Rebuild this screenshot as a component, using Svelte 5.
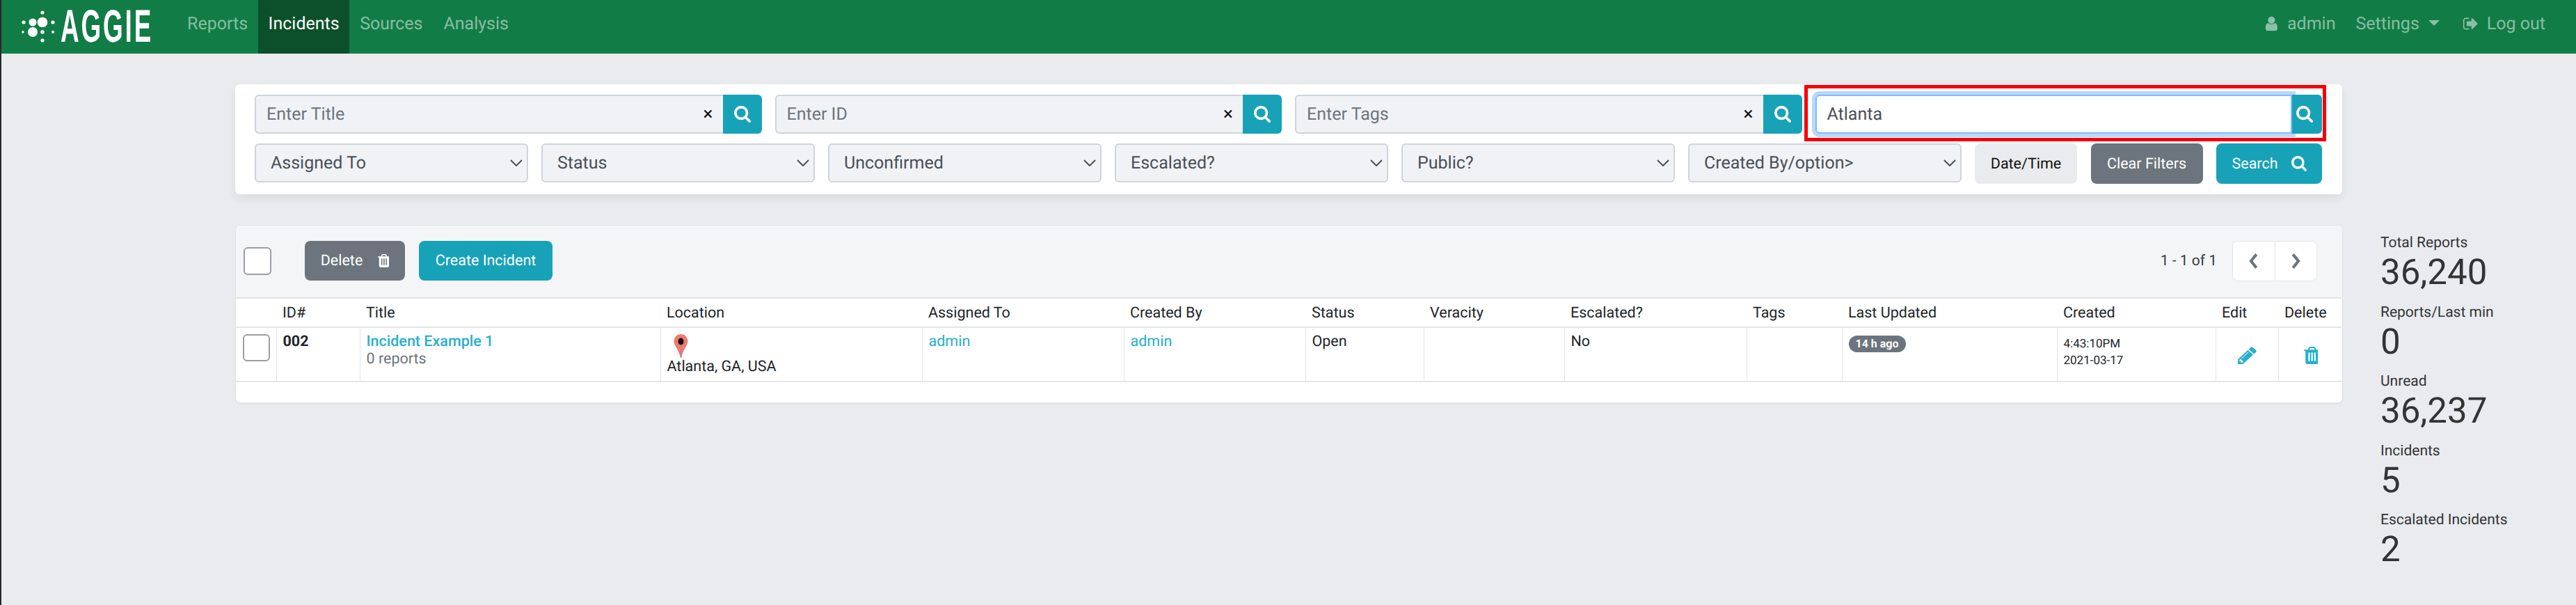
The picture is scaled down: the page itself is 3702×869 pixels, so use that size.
<script>
  const searches = [
    { label: 'Enter Title' },
    { label: 'Enter ID' },
    { label: 'Enter Tags' }
  ];
  const selects = ['Assigned To', 'Status', 'Unconfirmed', 'Escalated?', 'Public?', 'Created By/option>'];
  const heads = ['', 'ID#', 'Title', 'Location', 'Assigned To', 'Created By', 'Status', 'Veracity', 'Escalated?', 'Tags', 'Last Updated', 'Created', 'Edit', 'Delete'];
  const stats = [
    ['Total Reports', '36,240'],
    ['Reports/Last min', '0'],
    ['Unread', '36,237'],
    ['Incidents', '5'],
    ['Escalated Incidents', '2']
  ];
  const searchPath = 'M1152 704q0-185-131.5-316.5t-316.5-131.5-316.5 131.5-131.5 316.5 131.5 316.5 316.5 131.5 316.5-131.5 131.5-316.5zm512 832q0 52-38 90t-90 38q-54 0-90-38l-343-342q-179 124-399 124-143 0-273.5-55.5t-225-150-150-225-55.5-273.5 55.5-273.5 150-225 225-150 273.5-55.5 273.5 55.5 225 150 150 225 55.5 273.5q0 220-124 399l343 343q37 37 37 90z';
  const trashPath = 'M704 1376v-704q0-14-9-23t-23-9h-64q-14 0-23 9t-9 23v704q0 14 9 23t23 9h64q14 0 23-9t9-23zm256 0v-704q0-14-9-23t-23-9h-64q-14 0-23 9t-9 23v704q0 14 9 23t23 9h64q14 0 23-9t9-23zm256 0v-704q0-14-9-23t-23-9h-64q-14 0-23 9t-9 23v704q0 14 9 23t23 9h64q14 0 23-9t9-23zm-544-992h448l-48-117q-7-9-17-11h-317q-10 2-17 11zm928 32v64q0 14-9 23t-23 9h-96v948q0 83-47 143.5t-113 60.5h-832q-66 0-113-58.5t-47-141.5v-952h-96q-14 0-23-9t-9-23v-64q0-14 9-23t23-9h309l70-167q15-37 54-63t79-26h320q40 0 79 26t54 63l70 167h309q14 0 23 9t9 23z';
  const pencilPath = 'M491 1536l91-91-235-235-91 91v107h128v128h107zm523-928q0-22-22-22-10 0-17 7l-542 542q-7 7-7 17 0 22 22 22 10 0 17-7l542-542q7-7 7-17zm-54-192l416 416-832 832h-416v-416zm683 96q0 53-37 90l-166 166-416-416 166-165q36-38 90-38 53 0 91 38l235 234q37 39 37 91z';
  const userPath = 'M1408 1399q0 109-62.5 187t-150.5 78h-854q-88 0-150.5-78t-62.5-187q0-85 8.5-160.5t31.5-152 58.5-131 94-89 134.5-34.5q131 128 313 128t313-128q76 0 134.5 34.5t94 89 58.5 131 31.5 152 8.5 160.5zm-256-887q0 159-112.5 271.5t-271.5 112.5-271.5-112.5-112.5-271.5 112.5-271.5 271.5-112.5 271.5 112.5 112.5 271.5z';
  const logoutPath = 'M704 1440q0 4 1 20t.5 26.5-3 23.5-10 19.5-20.5 6.5h-320q-119 0-203.5-84.5t-84.5-203.5v-704q0-119 84.5-203.5t203.5-84.5h320q13 0 22.5 9.5t9.5 22.5q0 4 1 20t.5 26.5-3 23.5-10 19.5-20.5 6.5h-320q-66 0-113 47t-47 113v704q0 66 47 113t113 47h312l11.5 1 11.5 3 8 5.5 7 9 2 13.5zm928-544q0 26-19 45l-544 544q-19 19-45 19t-45-19-19-45v-288h-448q-26 0-45-19t-19-45v-384q0-26 19-45t45-19h448v-288q0-26 19-45t45-19 45 19l544 544q19 19 19 45z';
</script>

<div class="app">
  <nav class="nav">
    <div class="logo">
      <svg class="dots" viewBox="0 0 60 60" width="60" height="60" aria-hidden="true">
        <g fill="#fff" transform="translate(-28 -4)">
          <circle cx="61" cy="32" r="7.3"/><circle cx="47" cy="32" r="5.5"/><circle cx="47" cy="46" r="7"/>
          <circle cx="61" cy="46" r="2.8"/><circle cx="61" cy="18" r="2.6"/><circle cx="61" cy="58" r="2.6"/>
          <circle cx="34" cy="32" r="2.6"/><circle cx="33" cy="46" r="1.7"/><circle cx="76" cy="32" r="2.6"/><circle cx="76" cy="46" r="2"/>
        </g>
      </svg>
      <span class="wordmark">AGGIE</span>
    </div>
    <div class="links">
      <a>Reports</a><a class="active">Incidents</a><a>Sources</a><a>Analysis</a>
    </div>
    <div class="right">
      <a class="r-admin"><svg class="ic-user" viewBox="0 0 1408 1792" aria-hidden="true"><path d={userPath}/></svg>admin</a>
      <a class="r-settings">Settings<i class="caret"></i></a>
      <a class="r-logout"><svg class="ic-logout" viewBox="0 0 1664 1792" aria-hidden="true"><path d={logoutPath}/></svg>Log out</a>
    </div>
  </nav>

  <div class="page">
    <main class="main">
      <section class="filters">
        <div class="row1">
          {#each searches as s}
            <div class="igroup">
              <div class="field"><span class="ph">{s.label}</span><span class="clear">×</span></div>
              <button class="go"><svg viewBox="0 0 1664 1664" aria-hidden="true"><path d={searchPath}/></svg></button>
            </div>
          {/each}
          <div class="igroup focused">
            <div class="field"><span class="val">Atlanta</span></div>
            <button class="go"><svg viewBox="0 0 1664 1664" aria-hidden="true"><path d={searchPath}/></svg></button>
            <div class="annot"></div>
          </div>
        </div>
        <div class="row2">
          {#each selects as s}
            <div class="sel"><span>{s}</span>
              <svg viewBox="0 0 18 10" aria-hidden="true"><path d="M1 1l8 8 8-8" fill="none" stroke="#495057" stroke-width="2"/></svg>
            </div>
          {/each}
          <button class="btn date">Date/Time</button>
          <button class="btn grey clearf">Clear Filters</button>
          <button class="btn teal searchb">Search<svg viewBox="0 0 1664 1664" aria-hidden="true"><path d={searchPath}/></svg></button>
        </div>
      </section>

      <section class="tcard">
        <div class="toolbar">
          <span class="check top"></span>
          <button class="btn grey del">Delete<svg viewBox="0 128 1408 1536" aria-hidden="true"><path d={trashPath}/></svg></button>
          <button class="btn teal create">Create Incident</button>
          <div class="pager">
            <span class="count">1 - 1 of 1</span>
            <div class="pbtns">
              <button aria-label="previous"><svg viewBox="0 0 12 20"><path d="M9.5 2L3 10l6.5 8" fill="none" stroke="#6c757d" stroke-width="3.4"/></svg></button>
              <button aria-label="next"><svg viewBox="0 0 12 20"><path d="M2.5 2L9 10l-6.5 8" fill="none" stroke="#6c757d" stroke-width="3.4"/></svg></button>
            </div>
          </div>
        </div>
        <table>
          <colgroup>
            <col class="c0"/><col class="c1"/><col class="c2"/><col class="c3"/><col class="c4"/><col class="c5"/><col class="c6"/>
            <col class="c7"/><col class="c8"/><col class="c9"/><col class="c10"/><col class="c11"/><col class="c12"/><col class="c13"/>
          </colgroup>
          <thead><tr>{#each heads as h}<th>{h}</th>{/each}</tr></thead>
          <tbody>
            <tr>
              <td class="cb"><span class="check"></span></td>
              <td><b class="id">002</b></td>
              <td class="title"><a class="tlink">Incident Example 1</a><div class="sub">0 reports</div></td>
              <td class="loc">
                <svg class="pin" viewBox="0 0 21 34" aria-hidden="true">
                  <path d="M10.5 0C4.7 0 .5 4.6.5 10.2c0 6.5 6.8 11 9.2 23.3h1.6c2.4-12.3 9.2-16.8 9.2-23.3C20.5 4.6 16.3 0 10.5 0z" fill="#ef7b70"/>
                  <path d="M10 22h1l-.1 12h-.8z" fill="#8f8f8f"/>
                  <ellipse cx="10.5" cy="10.5" rx="4" ry="5" fill="#111"/>
                </svg>
                <div>Atlanta, GA, USA</div>
              </td>
              <td><a class="l">admin</a></td>
              <td><a class="l">admin</a></td>
              <td>Open</td>
              <td></td>
              <td>No</td>
              <td></td>
              <td><span class="badge">14 h ago</span></td>
              <td class="when"><div>4:43:10PM</div><div>2021-03-17</div></td>
              <td class="act"><svg class="pencil" viewBox="128 128 1536 1536" preserveAspectRatio="none" aria-hidden="true"><path d={pencilPath}/></svg></td>
              <td class="act"><svg class="bin" viewBox="0 128 1408 1536" preserveAspectRatio="none" aria-hidden="true"><path d={trashPath}/></svg></td>
            </tr>
          </tbody>
        </table>
      </section>
    </main>

    <aside class="stats">
      {#each stats as [k, v]}
        <div class="stat"><div class="k">{k}</div><div class="v">{v}</div></div>
      {/each}
    </aside>
  </div>
</div>

<style>
  :global(body) { margin: 0; background: #e9ebef; }
  * { box-sizing: border-box; }
  .app { width: 3702px; height: 869px; overflow: hidden; border-left: 2px solid #26292b; background: #e9ebef; font-family: Roboto, "Liberation Sans", sans-serif; color: #212529; text-rendering: geometricPrecision; }
  button { font-family: inherit; border: 0; padding: 0; margin: 0; text-rendering: geometricPrecision; }

  .nav { height: 77px; background: #117c45; display: flex; align-items: stretch; }
  .logo { width: 232px; display: flex; align-items: flex-start; position: relative; overflow: hidden; }
  .dots { flex: none; margin: 4px 0 0 26px; }
  .wordmark { position: absolute; left: 85px; top: 0; font-family: "Liberation Sans", sans-serif; font-size: 66px; line-height: 74px; font-weight: 700; color: #fff; letter-spacing: 5px; transform: scaleX(.56); transform-origin: left top; }
  .links { display: flex; }
  .links a { display: flex; align-items: center; padding: 0 0 9px; font-size: 25px; color: rgba(255,255,255,.5); }
  .links a:nth-child(1) { margin-left: 35px; margin-right: 15px; }
  .links a:nth-child(2) { width: 131px; justify-content: center; color: #fff; background: #0c5029; }
  .links a:nth-child(3) { margin-left: 15px; margin-right: 30px; }
  .right { margin-left: auto; display: flex; align-items: center; padding-bottom: 9px; font-size: 25px; color: rgba(255,255,255,.5); }
  .right a { display: flex; align-items: center; }
  .ic-user { width: 19px; height: 24px; fill: #8bc0a4; margin-right: 14px; }
  .r-settings { margin-left: 29px; }
  .caret { display: block; width: 0; height: 0; border: 8px solid transparent; border-top: 8px solid #8bc0a4; border-bottom: 0; margin-left: 13px; margin-bottom: 3px; }
  .r-logout { margin-left: 33px; margin-right: 44px; }
  .ic-logout { width: 22px; height: 24px; fill: #8bc0a4; margin-right: 13px; }

  .page { display: flex; align-items: flex-start; }
  .main { width: 3028px; margin-left: 336px; padding-top: 44px; flex: none; }

  .filters { height: 158px; background: #fff; border-radius: 6px; padding: 15px 29px 0 28px; box-shadow: 0 6px 14px rgba(0,0,0,.07); }
  .row1 { display: flex; gap: 19px; }
  .igroup { flex: 1; height: 56px; display: flex; position: relative; min-width: 0; }
  .field { flex: 1; display: flex; align-items: center; justify-content: space-between; padding: 0 14px 0 15px; background: #f1f2f5; border: 2px solid #cfd4da; border-right: 0; border-radius: 6px 0 0 6px; font-size: 25px; }
  .ph { color: #6c757d; }
  .val { color: #495057; }
  .clear { color: #111; font-size: 26px; font-weight: 400; line-height: 1; }
  .go { flex: none; width: 56px; background: #17a2b8; border-radius: 0 6px 6px 0; display: flex; align-items: center; justify-content: center; }
  .go svg { width: 24px; height: 24px; fill: #fff; }
  .focused .field { background: #fff; border: 2px solid #80bdff; border-radius: 6px 0 0 6px; box-shadow: 0 0 0 5px #b8d9fb; }
  .focused .go { width: 43px; position: relative; z-index: 1; padding-right: 8px; }
  .annot { position: absolute; left: -16px; right: -6px; top: -14px; bottom: -11px; border: 5px solid #f40008; z-index: 2; pointer-events: none; }

  .row2 { display: flex; gap: 19.5px; margin-top: 14px; align-items: flex-start; }
  .sel { flex: 1; min-width: 0; height: 56px; background: #f1f2f5; border: 2px solid #cfd4da; border-radius: 6px; font-size: 25px; color: #495057; display: flex; align-items: center; justify-content: space-between; padding: 0 6px 0 21px; }
  .sel svg { width: 18px; height: 10px; flex: none; }
  .btn { height: 58px; border-radius: 8px; font-size: 21.5px; display: flex; align-items: center; justify-content: center; color: #fff; flex: none; }
  .grey { background: #6c757d; }
  .teal { background: #17a2b8; }
  .date { width: 147px; background: #e9ebee; color: #111; }
  .clearf { width: 161px; }
  .searchb { width: 152px; }
  .searchb svg { width: 22px; height: 22px; fill: #fff; margin-left: 19px; }

  .tcard { margin-top: 45px; height: 254px; background: #fff; border-radius: 6px; box-shadow: 0 0 0 1px #e0e2e6, 0 2px 3px rgba(0,0,0,.06); overflow: hidden; margin-left: 1px; }
  .toolbar { height: 103px; background: #f4f5f7; display: flex; align-items: center; padding: 0 36px 2px 11px; }
  .check { display: block; width: 40px; height: 40px; border: 2px solid #9a9ea3; border-radius: 6px; background: #fff; }
  .del { width: 144px; margin-left: 48px; height: 57px; }
  .del svg { width: 19px; height: 19px; fill: #fff; margin-left: 19px; }
  .create { width: 192px; margin-left: 20px; height: 57px; }
  .pager { margin-left: auto; display: flex; align-items: center; }
  .count { font-size: 21px; color: #343a40; margin-right: 22px; }
  .pbtns { display: flex; width: 122px; height: 58px; background: #fff; border: 1px solid #e2e4e8; border-radius: 8px; overflow: hidden; }
  .pbtns button { flex: 1; background: #fff; display: flex; align-items: center; justify-content: center; }
  .pbtns button + button { border-left: 1px solid #dfe1e5; }
  .pbtns svg { width: 15px; height: 24px; }

  table { width: 3026px; table-layout: fixed; border-collapse: collapse; font-size: 21.5px; }
  .c0 { width: 58px; } .c1 { width: 120px; } .c2 { width: 432px; } .c3 { width: 376px; } .c4 { width: 290px; } .c5 { width: 261px; } .c6 { width: 170px; }
  .c7 { width: 202px; } .c8 { width: 262px; } .c9 { width: 137px; } .c10 { width: 309px; } .c11 { width: 228px; } .c12 { width: 90px; } .c13 { width: 91px; }
  th { height: 42px; padding: 0 9px; font-weight: 400; text-align: left; border-top: 2px solid #dfe1e5; border-bottom: 2px solid #e3e5e8; color: #212529; white-space: nowrap; }
  td { height: 78px; padding: 7px 9px 0; vertical-align: top; line-height: 26px; border-bottom: 2px solid #e3e5e8; border-left: 1px solid #e3e5e9; }
  td:first-child { border-left: 0; }
  td.cb { padding: 9px 0 0 10px; }
  td.cb .check { width: 39px; height: 39px; }
  .id { font-weight: 700; }
  .tlink { font-weight: 500; color: #27b0cb; }
  .sub { color: #6c757d; line-height: 24px; }
  .l { color: #27b0cb; }
  .pin { display: block; width: 21px; height: 34px; margin: 2px 0 1px 9px; }
  .loc { line-height: 24px; }
  .badge { display: inline-block; margin-top: 4px; height: 24px; width: 82px; border-radius: 12px; background: #6c757d; color: #fff; font-size: 16px; font-weight: 700; line-height: 24px; text-align: center; vertical-align: top; }
  .when { font-size: 17px; line-height: 24px; padding-top: 11px; }
  .act { padding: 27px 0 0; text-align: center; }
  .pencil { width: 27px; height: 25px; fill: #27b0cb; }
  .bin { width: 23px; height: 25px; fill: #27b0cb; }

  .stats { margin-left: 55px; padding-top: 259px; color: #333; }
  .stat { height: 99.5px; }
  .k { font-size: 21px; line-height: 26px; }
  .v { font-size: 51px; line-height: 60px; margin-top: 0; }
</style>
